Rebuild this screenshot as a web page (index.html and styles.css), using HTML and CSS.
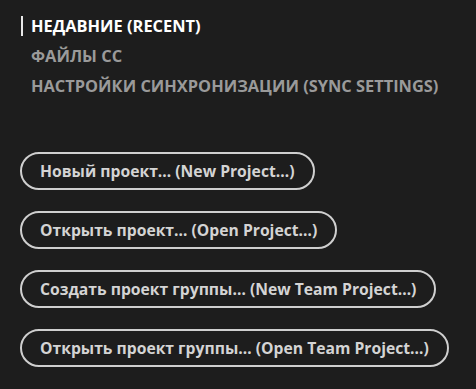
FILE: index.html
```html
<!DOCTYPE html>
<html lang="ru">
<head>
<meta charset="utf-8">
<link rel="stylesheet" href="styles.css">
</head>
<body>
<div class="page">
  <nav class="tabs">
    <div class="tab active">НЕДАВНИЕ (RECENT)</div>
    <div class="tab">ФАЙЛЫ CC</div>
    <div class="tab">НАСТРОЙКИ СИНХРОНИЗАЦИИ (SYNC SETTINGS)</div>
  </nav>
  <div class="actions">
    <button class="btn">Новый проект… (New Project…)</button>
    <button class="btn">Открыть проект… (Open Project…)</button>
    <button class="btn">Создать проект группы… (New Team Project…)</button>
    <button class="btn">Открыть проект группы… (Open Team Project…)</button>
  </div>
</div>
</body>
</html>
```
FILE: styles.css
```css
html, body {
  margin: 0;
  padding: 0;
  background: #1d1d1d;
  width: 476px;
  height: 389px;
  overflow: hidden;
}
.page {
  padding: 16px 0 0 21px;
  font-family: "Open Sans", Lato, sans-serif;
}
.tabs {
  display: flex;
  flex-direction: column;
  gap: 10px;
}
.tab {
  font-size: 16.4px;
  font-weight: 700;
  line-height: 20px;
  color: #9a9a9a;
  padding-left: 8px;
  border-left: 2px solid transparent;
}
.tab.active {
  color: #ffffff;
  border-left-color: #e8e8e8;
}
.actions {
  margin-top: 56px;
  display: flex;
  flex-direction: column;
  align-items: flex-start;
  gap: 21px;
  margin-left: -1px;
}
.btn {
  font-family: inherit;
  font-size: 15.7px;
  font-weight: 700;
  color: #d4d4d4;
  background: transparent;
  border: 2px solid #cfcfcf;
  border-radius: 19px;
  height: 38px;
  padding: 0 18px;
  cursor: pointer;
}
```
